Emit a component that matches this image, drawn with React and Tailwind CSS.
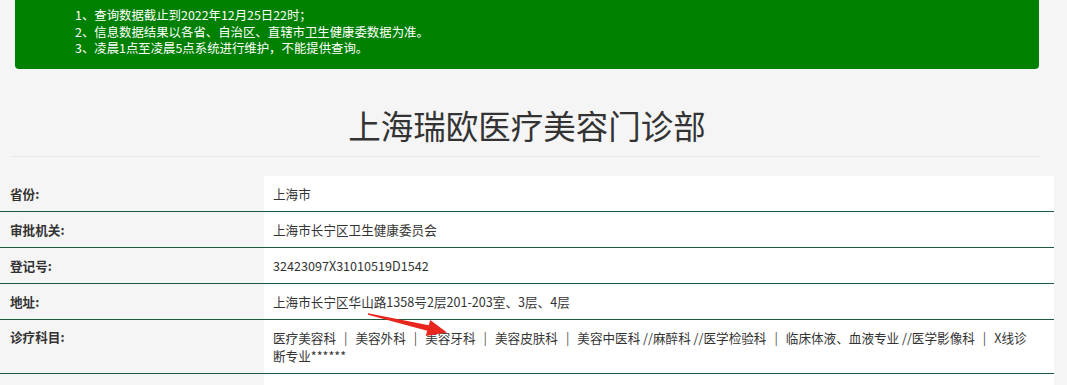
import React from 'react';

const rows = [
  { label: '省份:', value: '上海市' },
  { label: '审批机关:', value: '上海市长宁区卫生健康委员会' },
  { label: '登记号:', value: '32423097X31010519D1542' },
  { label: '地址:', value: '上海市长宁区华山路1358号2层201-203室、3层、4层' },
];

const Sep = () => <span className="px-[8px] text-[#555]">|</span>;

export default function App() {
  return (
    <div className="relative min-h-screen bg-[#f5f5f5] font-['Microsoft_YaHei','Noto_Sans_CJK_SC',sans-serif] text-[12.6px] text-[#333]">
      {/* 提示横幅 */}
      <div className="ml-[15px] w-[1024px] h-[69px] bg-[#008000] rounded-b-[4px] text-white text-[12.4px] pl-[60px] pt-[7px] leading-[16.5px]">
        <div>1、查询数据截止到2022年12月25日22时；</div>
        <div>2、信息数据结果以各省、自治区、直辖市卫生健康委数据为准。</div>
        <div>3、凌晨1点至凌晨5点系统进行维护，不能提供查询。</div>
      </div>

      <h1 className="mt-[38px] w-[1054px] text-center text-[32.5px] leading-[35px] font-normal text-[#333]">
        上海瑞欧医疗美容门诊部
      </h1>
      <div className="ml-[10px] mt-[14px] w-[1030px] border-t border-[#eaeaea]" />

      <div className="mt-[19px] w-[1054px]">
        {rows.map(r => (
          <div key={r.label} className="grid grid-cols-[264px_790px] border-b border-[#1d5a3b]">
            <div className="pl-[10px] py-[8px] leading-[19px] font-bold">{r.label}</div>
            <div className="bg-white pl-[9px] py-[8px] leading-[19px]">{r.value}</div>
          </div>
        ))}
        <div className="grid grid-cols-[264px_790px] border-b border-[#1d5a3b]">
          <div className="pl-[10px] py-[8px] leading-[18px] font-bold">诊疗科目:</div>
          <div className="bg-white pl-[9px] pr-[8px] pt-[9px] pb-[8px] leading-[18px]">
            医疗美容科<Sep />美容外科<Sep />美容牙科<Sep />美容皮肤科<Sep />美容中医科 //麻醉科 //医学检验科<Sep />临床体液、血液专业 //医学影像科<Sep />X线诊
            <br />
            断专业******
          </div>
        </div>
        <div className="grid grid-cols-[264px_790px] h-[30px]">
          <div />
          <div className="bg-white" />
        </div>
      </div>

      {/* 红色箭头标注 */}
      <svg className="absolute left-[360px] top-[305px]" width="95" height="35" viewBox="0 0 95 35">
        <polygon points="8,8.3 8,9.7 67.2,25.8 65.8,31 87,27.5 70.2,15 68.8,20.2" fill="#e8261d" />
      </svg>
    </div>
  );
}
